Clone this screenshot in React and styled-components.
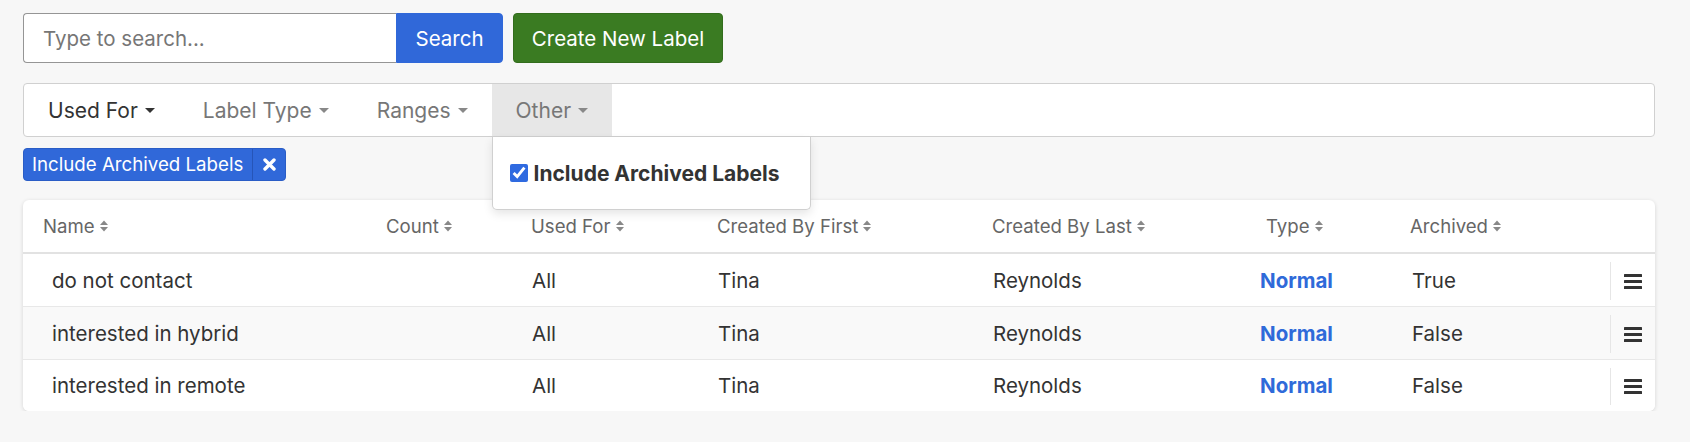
import React from 'react';
import styled, { createGlobalStyle } from 'styled-components';

const GlobalStyle = createGlobalStyle`
  body {
    margin: 0;
    background: #f7f7f7;
    font-family: Inter, "Noto Sans", sans-serif;
    color: #333;
  }
`;

const Page = styled.div`
  padding: 13px 35px 0 23px;
`;

const TopRow = styled.div`
  display: flex;
  gap: 10px;
  height: 50px;
`;

const SearchGroup = styled.div`
  display: flex;
`;

const SearchInput = styled.input`
  box-sizing: border-box;
  width: 373px;
  height: 50px;
  padding: 0 19px;
  font-family: inherit;
  font-size: 20.5px;
  color: #333;
  border: 1px solid #959595;
  border-right: none;
  border-radius: 4px 0 0 4px;
  background: #fff;
  outline: none;

  &::placeholder {
    color: #767676;
  }
`;

const Button = styled.button`
  box-sizing: border-box;
  width: ${(p) => p.$width}px;
  height: 50px;
  padding: 0;
  font-family: inherit;
  font-size: 20.5px;
  color: #fff;
  background: ${(p) => p.$bg};
  border: 1px solid ${(p) => p.$border};
  border-radius: ${(p) => (p.$joined ? '0 4px 4px 0' : '4px')};
  cursor: pointer;
`;

const FilterBar = styled.div`
  display: flex;
  margin-top: 20px;
  height: 54px;
  box-sizing: border-box;
  background: #fff;
  border: 1px solid #d0d0d0;
  border-radius: 4px;
`;

const Tab = styled.div`
  position: relative;
  display: flex;
  align-items: center;
  gap: 7px;
  padding: 0 24px;
  font-size: 21px;
  color: ${(p) => (p.$dark ? '#333' : '#777')};
  background: ${(p) => (p.$open ? '#e7e7e7' : 'transparent')};
  cursor: pointer;
`;

const Dropdown = styled.div`
  position: absolute;
  top: calc(100% + 1px);
  left: 0;
  z-index: 10;
  box-sizing: border-box;
  width: 319px;
  height: 73px;
  padding: 0 17px;
  display: flex;
  align-items: center;
  gap: 6px;
  background: #fff;
  border: 1px solid #d0d0d0;
  border-top: none;
  border-radius: 0 0 5px 5px;
  box-shadow: 0 4px 10px rgba(0, 0, 0, 0.1);
  cursor: default;
`;

const Check = styled.input`
  width: 18px;
  height: 18px;
  margin: 0;
  accent-color: #2f6ae0;
`;

const DropLabel = styled.span`
  font-size: 21px;
  font-weight: 700;
  color: #333;
`;

const TagRow = styled.div`
  display: flex;
  margin-top: 11px;
`;

const Tag = styled.div`
  display: flex;
  height: 33px;
  box-sizing: border-box;
  background: #3068d9;
  border: 1px solid #2a5dc6;
  border-radius: 4px;
  color: #fff;
  font-size: 18.7px;
`;

const TagText = styled.span`
  display: flex;
  align-items: center;
  padding: 0 9px 0 8px;
`;

const TagClose = styled.span`
  display: flex;
  align-items: center;
  justify-content: center;
  width: 32px;
  border-left: 1px solid #2655b8;
  cursor: pointer;
`;

const Card = styled.div`
  margin-top: 19px;
  background: #fff;
  border-radius: 6px;
  box-shadow: 0 1px 4px rgba(0, 0, 0, 0.14);
  overflow: hidden;
`;

const COLS = '343px 145px 186px 275px 274px 144px 220px 1fr';

const HeadRow = styled.div`
  display: grid;
  grid-template-columns: ${COLS};
  height: 54px;
  box-sizing: border-box;
  border-bottom: 2px solid #e2e2e2;
`;

const Row = styled.div`
  display: grid;
  grid-template-columns: ${COLS};
  height: ${(p) => (p.$last ? 51 : 52)}px;
  background: ${(p) => (p.$alt ? '#f9f9f9' : '#fff')};
  border-top: ${(p) => (p.$first ? 'none' : '1px solid #e8e8e8')};
`;

const HeadCell = styled.div`
  display: flex;
  align-items: center;
  gap: 5px;
  padding-left: ${(p) => p.$pad ?? 20}px;
  font-size: 18.6px;
  color: #666;
  cursor: pointer;
`;

const Cell = styled.div`
  display: flex;
  align-items: center;
  padding-left: ${(p) => p.$pad ?? 21}px;
  font-size: 20.5px;
  color: #333;
`;

const TypeLink = styled.span`
  font-weight: 700;
  color: #2f6ad9;
`;

const MenuCell = styled.div`
  display: flex;
  align-items: center;
  padding: 8px 0 6px;
`;

const MenuInner = styled.div`
  display: flex;
  align-items: center;
  height: 100%;
  padding-left: 13px;
  border-left: 1px solid #e6e6e6;
  cursor: pointer;
`;

const Caret = ({ color }) => (
  <svg width="10" height="5" viewBox="0 0 10 5">
    <polygon points="0,0 10,0 5,5" fill={color} />
  </svg>
);

const SortIcon = () => (
  <svg width="8" height="12" viewBox="0 0 8 12">
    <polygon points="0,5 4,0.5 8,5" fill="#888" />
    <polygon points="0,7 4,11.5 8,7" fill="#888" />
  </svg>
);

const Bars = () => (
  <svg width="18" height="15" viewBox="0 0 18 15">
    <rect x="0" y="0" width="18" height="3" rx="0.5" fill="#333" />
    <rect x="0" y="6" width="18" height="3" rx="0.5" fill="#333" />
    <rect x="0" y="12" width="18" height="3" rx="0.5" fill="#333" />
  </svg>
);

const CloseIcon = () => (
  <svg width="13" height="13" viewBox="0 0 13 13">
    <path d="M2 2 L11 11 M11 2 L2 11" stroke="#fff" strokeWidth="3.4" strokeLinecap="round" />
  </svg>
);

const headers = ['Name', 'Count', 'Used For', 'Created By First', 'Created By Last', 'Type', 'Archived'];

const labels = [
  { name: 'do not contact', usedFor: 'All', first: 'Tina', last: 'Reynolds', type: 'Normal', archived: 'True' },
  { name: 'interested in hybrid', usedFor: 'All', first: 'Tina', last: 'Reynolds', type: 'Normal', archived: 'False' },
  { name: 'interested in remote', usedFor: 'All', first: 'Tina', last: 'Reynolds', type: 'Normal', archived: 'False' },
];

const filters = [
  { label: 'Used For', dark: true },
  { label: 'Label Type' },
  { label: 'Ranges' },
  { label: 'Other', open: true },
];

const App = () => {
  return (
    <Page>
      <GlobalStyle />
      <TopRow>
        <SearchGroup>
          <SearchInput type="text" placeholder="Type to search..." />
          <Button $bg="#3068d9" $border="#3068d9" $joined $width={107}>
            Search
          </Button>
        </SearchGroup>
        <Button $bg="#3a7b22" $border="#336d1d" $width={210}>
          Create New Label
        </Button>
      </TopRow>

      <FilterBar>
        {filters.map((f) => (
          <Tab key={f.label} $dark={f.dark} $open={f.open}>
            {f.label}
            <Caret color={f.dark ? '#333' : '#888'} />
            {f.open && (
              <Dropdown>
                <Check type="checkbox" checked readOnly />
                <DropLabel>Include Archived Labels</DropLabel>
              </Dropdown>
            )}
          </Tab>
        ))}
      </FilterBar>

      <TagRow>
        <Tag>
          <TagText>Include Archived Labels</TagText>
          <TagClose>
            <CloseIcon />
          </TagClose>
        </Tag>
      </TagRow>

      <Card>
        <HeadRow>
          {headers.map((h) => (
            <HeadCell key={h}>
              {h}
              <SortIcon />
            </HeadCell>
          ))}
          <HeadCell />
        </HeadRow>
        {labels.map((l, i) => (
          <Row key={l.name} $alt={i % 2 === 1} $first={i === 0} $last={i === labels.length - 1}>
            <Cell $pad={29}>{l.name}</Cell>
            <Cell />
            <Cell>{l.usedFor}</Cell>
            <Cell>{l.first}</Cell>
            <Cell>{l.last}</Cell>
            <Cell $pad={14}>
              <TypeLink>{l.type}</TypeLink>
            </Cell>
            <Cell $pad={22}>{l.archived}</Cell>
            <MenuCell>
              <MenuInner>
                <Bars />
              </MenuInner>
            </MenuCell>
          </Row>
        ))}
      </Card>
    </Page>
  );
};

export default App;
